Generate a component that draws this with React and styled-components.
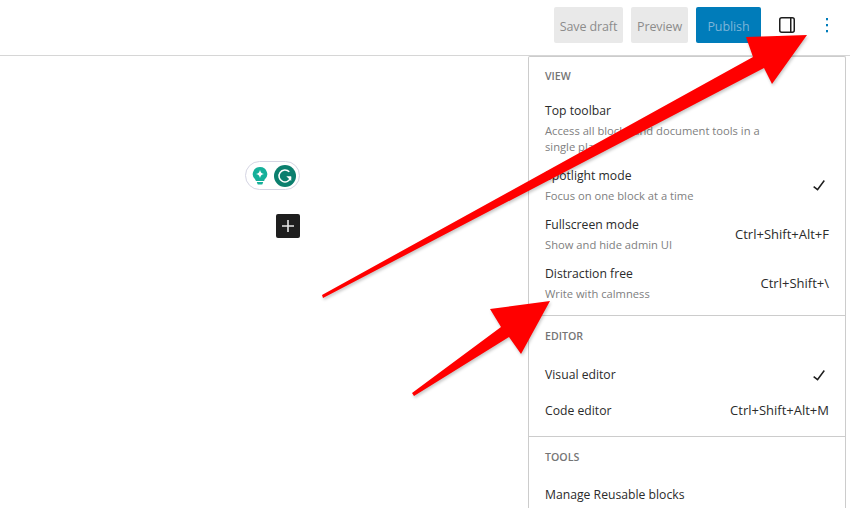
import React from "react";
import styled, { createGlobalStyle } from "styled-components";

const Global = createGlobalStyle`
  html, body { margin: 0; padding: 0; height: 100%; overflow: hidden; background: #fff; }
  body { font-family: "Open Sans", "Noto Sans", sans-serif; color: #1e1e1e; }
`;
const Page = styled.div`
  position: relative;
  width: 850px;
  height: 508px;
  overflow: hidden;
  display: flex;
  flex-direction: column;
`;
const Header = styled.header`
  flex: none;
  height: 48px;
  padding: 7px 5px 0 0;
  border-bottom: 1px solid #d6d6d6;
  display: flex;
  align-items: flex-start;
  justify-content: flex-end;
`;
const Btn = styled.div`
  width: ${(p) => p.$w}px;
  height: 36px;
  margin-right: 8px;
  border-radius: 2px;
  display: flex;
  align-items: center;
  justify-content: center;
  font-size: 12.5px;
  letter-spacing: -0.1px;
  padding-top: 3px;
  box-sizing: border-box;
  background: ${(p) => (p.$primary ? "#007cba" : "#e9e9e9")};
  color: ${(p) => (p.$primary ? "#7cb4d8" : "#8c8c8c")};
`;
const IconBtn = styled.div`
  width: 36px;
  height: 36px;
  display: flex;
  align-items: center;
  justify-content: center;
  & + & { margin-left: 4px; }
`;
const Body = styled.div`
  flex: 1;
  display: flex;
  min-height: 0;
`;
const Canvas = styled.main`
  flex: 1;
  padding: 105px 0 0 245px;
`;
const Column = styled.div`
  width: 55px;
  display: flex;
  flex-direction: column;
  align-items: flex-end;
  gap: 24px;
`;
const Pill = styled.div`
  width: 55px;
  height: 29px;
  box-sizing: border-box;
  border: 1px solid #d5d5e3;
  border-radius: 15px;
  display: flex;
  align-items: center;
  justify-content: space-between;
  padding: 0 3px 0 6px;
`;
const AddBlock = styled.div`
  width: 24px;
  height: 24px;
  border-radius: 2px;
  background: #1e1e1e;
  display: flex;
  align-items: center;
  justify-content: center;
`;
const Menu = styled.aside`
  width: 318px;
  margin-right: 4px;
  box-sizing: border-box;
  border: 1px solid #ccc;
  border-bottom: 0;
  border-radius: 2px 2px 0 0;
  flex: none;
`;
const Section = styled.section`
  padding: 11px 0 ${(p) => p.$pb ?? 8}px;
  & + & {
    border-top: 1px solid #ccc;
    padding-top: 12px;
  }
`;
const SectionLabel = styled.div`
  height: 16px;
  line-height: 16px;
  padding: 0 16px;
  margin-bottom: ${(p) => p.$mb ?? 12}px;
  font-size: 10.6px;
  font-weight: 600;
  color: #757575;
`;
const Row = styled.div`
  display: flex;
  align-items: center;
  justify-content: space-between;
  padding: ${(p) => (p.$info ? "5px 16px 6px" : "9px 16px 7px")};
`;
const Texts = styled.div`
  width: 220px;
`;
const Label = styled.div`
  font-size: 12.2px;
  line-height: 20px;
  color: #2b2b2b;
  white-space: nowrap;
`;
const Info = styled.div`
  margin-top: 2px;
  font-size: 11.2px;
  line-height: 16px;
  color: #808080;
`;
const Shortcut = styled.div`
  font-size: 13px;
  line-height: 20px;
  margin-top: ${(p) => (p.$up ? -2 : 0)}px;
  color: #2b2b2b;
  white-space: nowrap;
`;
const CheckSvg = styled.svg`
  width: 24px;
  height: 24px;
  margin: -2px -2px -2px 0;
  fill: #1e1e1e;
`;
const Arrows = styled.svg`
  position: absolute;
  left: 0;
  top: 0;
  width: 850px;
  height: 508px;
  pointer-events: none;
  filter: drop-shadow(1px 2px 1.5px rgba(0, 0, 0, 0.22));
`;

const Check = () => (
  <CheckSvg viewBox="0 0 24 24">
    <path d="M16.7 7.1l-6.3 8.5-3.3-2.5-.9 1.2 4.5 3.4L17.9 8z" />
  </CheckSvg>
);

const MenuRow = ({ label, info, right }) => (
  <Row $info={!!info}>
    <Texts>
      <Label>{label}</Label>
      {info && <Info>{info}</Info>}
    </Texts>
    {right}
  </Row>
);

export default function App() {
  return (
    <Page>
      <Global />
      <Header>
        <Btn $w={69}>Save draft</Btn>
        <Btn $w={57}>Preview</Btn>
        <Btn $w={65} $primary>Publish</Btn>
        <IconBtn>
          <svg width="24" height="24" viewBox="0 0 24 24" fill="none">
            <rect x="4.75" y="4.75" width="14.5" height="14.5" rx="2" stroke="#1e1e1e" strokeWidth="1.5" />
            <path d="M15.75 5v14" stroke="#1e1e1e" strokeWidth="1.5" />
          </svg>
        </IconBtn>
        <IconBtn>
          <svg width="24" height="24" viewBox="0 0 24 24" fill="#007cba">
            <rect x="11" y="5" width="2" height="2.3" />
            <rect x="11" y="11" width="2" height="2.3" />
            <rect x="11" y="17" width="2" height="2.3" />
          </svg>
        </IconBtn>
      </Header>
      <Body>
        <Canvas>
          <Column>
            <Pill>
              <svg width="16" height="18" viewBox="0 0 16 18">
                <path d="M8 0a7.200 7.200 0 0 1 4.300 13V14H3.700v-1A7.200 7.200 0 0 1 8 0z" fill="#15b09a" />
                <path d="M4.800 15h6.400l-.7 1.900a1 1 0 0 1-.9.7H6.400a1 1 0 0 1-.9-.7z" fill="#15b09a" />
                <path d="M8 3c.6 2.400 1.500 3.300 4 4-2.500.7-3.400 1.600-4 4-.6-2.400-1.500-3.300-4-4 2.500-.7 3.400-1.600 4-4z" fill="#fff" />
              </svg>
              <svg width="22" height="22" viewBox="0 0 22 22">
                <circle cx="11" cy="11" r="11" fill="#0b7f6e" />
                <path d="M15.300 6.800A6 6 0 1 0 16.800 12.500" fill="none" stroke="#fff" strokeWidth="1.500" />
                <path d="M12.300 11.300h4.900v4.800z" fill="#fff" />
              </svg>
            </Pill>
            <AddBlock>
              <svg width="14" height="14" viewBox="0 0 14 14">
                <path d="M6.200 1h1.600v5.200H13v1.600H7.800V13H6.200V7.800H1V6.200h5.200z" fill="#e6e6e6" />
              </svg>
            </AddBlock>
          </Column>
        </Canvas>
        <Menu>
          <Section $pb={7}>
            <SectionLabel>VIEW</SectionLabel>
            <MenuRow label="Top toolbar" info="Access all blocks and document tools in a single place" />
            <MenuRow label="Spotlight mode" info="Focus on one block at a time" right={<Check />} />
            <MenuRow label="Fullscreen mode" info="Show and hide admin UI" right={<Shortcut>Ctrl+Shift+Alt+F</Shortcut>} />
            <MenuRow label="Distraction free" info="Write with calmness" right={<Shortcut>Ctrl+Shift+\</Shortcut>} />
          </Section>
          <Section>
            <SectionLabel>EDITOR</SectionLabel>
            <MenuRow label="Visual editor" right={<Check />} />
            <MenuRow label="Code editor" right={<Shortcut $up>Ctrl+Shift+Alt+M</Shortcut>} />
          </Section>
          <Section>
            <SectionLabel $mb={11}>TOOLS</SectionLabel>
            <MenuRow label="Manage Reusable blocks" />
          </Section>
        </Menu>
      </Body>
      <Arrows viewBox="0 0 850 508">
        <polygon points="807,35 746,37 753,57 322,295 323,298 764,68 772,84" fill="#ff0000" />
        <polygon points="550,301 490,309 501,327 412,393 414,396 509,337 521,354" fill="#ff0000" />
      </Arrows>
    </Page>
  );
}
